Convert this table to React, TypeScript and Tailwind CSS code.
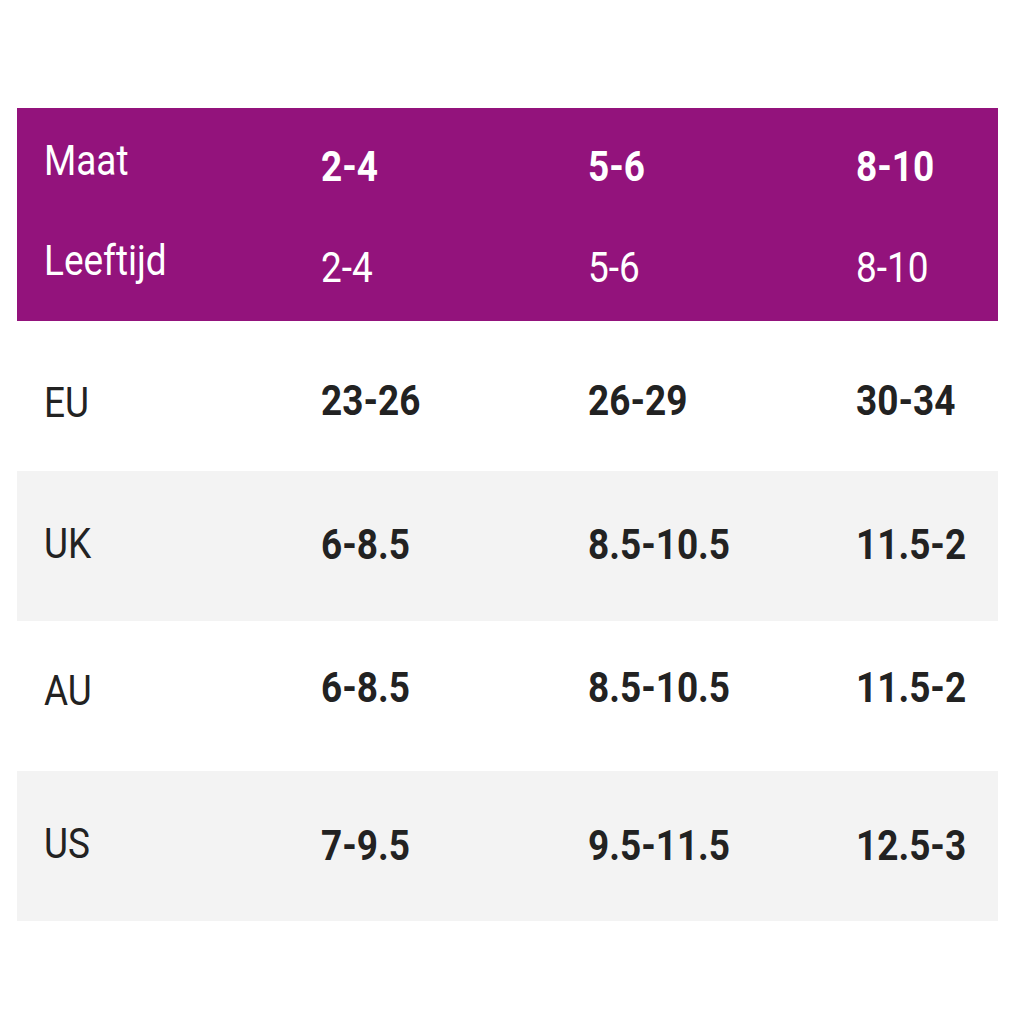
import React from 'react';

const cols = [
  { maat: '2-4', age: '2-4', eu: '23-26', uk: '6-8.5', au: '6-8.5', us: '7-9.5' },
  { maat: '5-6', age: '5-6', eu: '26-29', uk: '8.5-10.5', au: '8.5-10.5', us: '9.5-11.5' },
  { maat: '8-10', age: '8-10', eu: '30-34', uk: '11.5-2', au: '11.5-2', us: '12.5-3' },
];

// label / value top padding per row, measured off the design
const rows: { label: string; key: 'eu' | 'uk' | 'au' | 'us'; bg: string; pl: string; pv: string }[] = [
  { label: 'EU', key: 'eu', bg: 'bg-white', pl: 'pt-[61px]', pv: 'pt-[59px]' },
  { label: 'UK', key: 'uk', bg: 'bg-[#f3f3f3]', pl: 'pt-[52px]', pv: 'pt-[53px]' },
  { label: 'AU', key: 'au', bg: 'bg-white', pl: 'pt-[49px]', pv: 'pt-[46px]' },
  { label: 'US', key: 'us', bg: 'bg-[#f3f3f3]', pl: 'pt-[52px]', pv: 'pt-[54px]' },
];

function T({ children, bold }: { children: React.ReactNode; bold?: boolean }) {
  return (
    <span
      className={`inline-block origin-left scale-x-[0.88] whitespace-nowrap leading-none ${
        bold ? 'font-bold' : 'font-normal'
      }`}
    >
      {children}
    </span>
  );
}

const grid = 'grid grid-cols-[277px_267px_268px_169px] items-start';

export default function App() {
  return (
    <div className="min-h-screen w-[1024px] bg-white pt-[108px] pl-[17px] font-['Roboto',sans-serif] text-[42px]">
      <div className="w-[981px]">
        {/* Header */}
        <div className="bg-[#93137c] text-white">
          <div className={`${grid} h-[106px]`}>
            <div className="pl-[27px] pt-[32px] leading-none">
              <T>Maat</T>
            </div>
            {cols.map((c) => (
              <div key={c.maat} className="pl-[27px] pt-[38px] leading-none">
                <T bold>{c.maat}</T>
              </div>
            ))}
          </div>
          <div className={`${grid} h-[107px]`}>
            <div className="pl-[27px] pt-[26px] leading-none">
              <T>Leeftijd</T>
            </div>
            {cols.map((c) => (
              <div key={c.age} className="pl-[27px] pt-[33px] leading-none">
                <T>{c.age}</T>
              </div>
            ))}
          </div>
        </div>

        {/* Body */}
        {rows.map((r) => (
          <div key={r.label} className={`${grid} ${r.bg} h-[150px] text-[#222222]`}>
            <div className={`pl-[27px] ${r.pl} leading-none`}>
              <T>{r.label}</T>
            </div>
            {cols.map((c) => (
              <div key={c.maat} className={`pl-[27px] ${r.pv} leading-none`}>
                <T bold>{c[r.key]}</T>
              </div>
            ))}
          </div>
        ))}
      </div>
    </div>
  );
}
